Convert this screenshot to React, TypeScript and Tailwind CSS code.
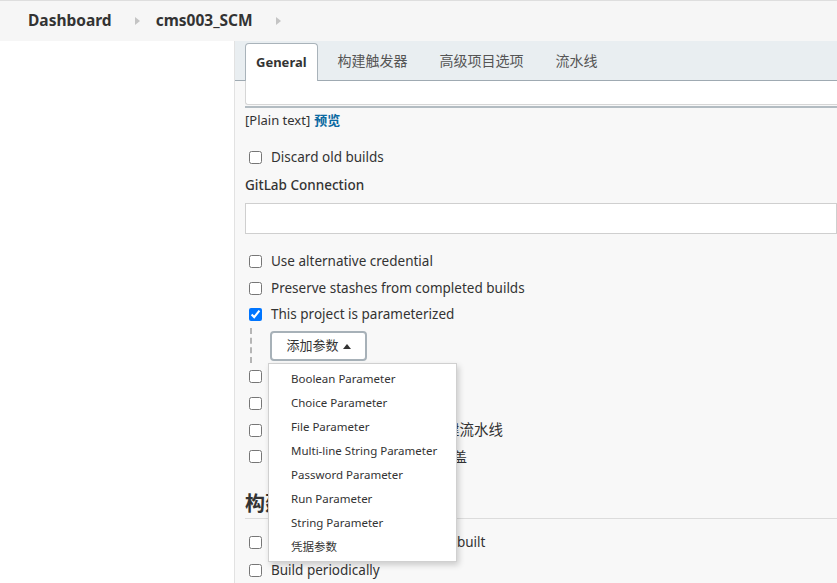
import React from "react";

const font = { fontFamily: '"Noto Sans", "Noto Sans CJK SC", sans-serif' };

function Chevron() {
  return (
    <svg width="5" height="8" viewBox="0 0 5 8" className="ml-[23px] mr-[16px]">
      <path d="M0 0 L5 4 L0 8 Z" fill="#c4c4c4" />
    </svg>
  );
}

function Check({
  label,
  checked = false,
  className = "",
  size = "text-[13.5px]",
}: {
  label: string;
  checked?: boolean;
  className?: string;
  size?: string;
}) {
  return (
    <label className={`flex items-center h-[26px] whitespace-nowrap ${className}`}>
      <input type="checkbox" defaultChecked={checked} className="ml-[4px] mr-[9px] w-[13px] h-[13px] m-0" />
      <span className={`${size} text-[#333]`}>{label}</span>
    </label>
  );
}

const params = [
  "Boolean Parameter",
  "Choice Parameter",
  "File Parameter",
  "Multi-line String Parameter",
  "Password Parameter",
  "Run Parameter",
  "String Parameter",
  "凭据参数",
];

export default function App() {
  return (
    <div className="w-[837px] h-[583px] overflow-hidden bg-white text-[#333]" style={font}>
      {/* breadcrumb */}
      <div className="h-[41px] border-t border-[#dedede] bg-[#f6f6f6] flex items-center pl-[28px]">
        <span className="text-[15.5px] font-bold text-[#333]">Dashboard</span>
        <Chevron />
        <span className="text-[15.5px] font-bold text-[#333]">cms003_SCM</span>
        <Chevron />
      </div>

      <div className="flex h-[542px]">
        <div className="w-[235px] bg-white border-r border-[#e2e2e2]" />

        <div className="flex-1 bg-[#f8f8f8] min-w-0">
          {/* tabs */}
          <div className="h-[40px] bg-[#e9eef1] border-b border-[#9faab2] flex items-end pl-[10px]">
            <div className="h-[38px] -mb-px px-[10px] mr-[4px] flex items-center bg-white border border-b-0 border-[#a9b3ba] rounded-t-[4px] text-[13px] font-bold">
              General
            </div>
            {["构建触发器", "高级项目选项", "流水线"].map((t) => (
              <div key={t} className="h-[39px] px-[16px] flex items-center text-[14px] text-[#555]">
                {t}
              </div>
            ))}
          </div>

          <div className="pl-[10px] relative">
            {/* description textarea remnant */}
            <div className="h-[24px] bg-white border-l border-b border-[#d6d6d6] rounded-bl-[3px]" />
            <div className="h-[3px] border-b-2 border-[#b3bcc2]" />

            <div className="h-[26px] flex items-center text-[13px]">
              <span className="text-[#333]">[Plain text]</span>
              <span className="ml-[4px] text-[#0b6aa2] font-bold">预览</span>
            </div>

            <Check label="Discard old builds" className="mt-[10px]" />
            <div className="mt-[2px] h-[26px] flex items-center text-[13.5px] font-medium">GitLab Connection</div>
            <div className="mt-[5px] h-[31px] bg-white border border-[#cfcfcf]" />

            <Check label="Use alternative credential" className="mt-[14px]" />
            <Check label="Preserve stashes from completed builds" className="mt-[1px]" />
            <Check label="This project is parameterized" checked />

            <div className="relative h-[36px] pt-[4px]">
              <div className="absolute left-[5px] top-[1px] h-[35px] border-l-2 border-dashed border-[#b5b5b5]" />
              <button className="ml-[25px] h-[30px] w-[97px] flex items-center justify-center gap-[4px] bg-white border-2 border-[#a7b1b8] rounded-[4px] text-[13px] text-[#333]">
                添加参数
                <svg width="8" height="5" viewBox="0 0 8 5">
                  <path d="M0 5 L4 0 L8 5 Z" fill="#333" />
                </svg>
              </button>

              <div className="absolute left-[23px] top-[36px] z-10 w-[189px] h-[199px] bg-white border border-[#d0d0d0] shadow-[2px_3px_6px_rgba(0,0,0,0.18)] pt-[3px]">
                {params.map((p) => (
                  <div key={p} className="h-[24px] flex items-center pl-[22px] text-[11.5px] text-[#333] whitespace-nowrap">
                    {p}
                  </div>
                ))}
              </div>
            </div>

            <Check label="节流构建" size="text-[14px]" />
            <Check label="不允许并发构建" size="text-[14px]" className="mt-[1px]" />
            <Check label="控制器重启后不允许恢复构建流水线" size="text-[14.5px]" className="mt-[1px]" />
            <Check label="流水线效率、持久保存设置覆盖" size="text-[14px]" />

            <div className="mt-[21px] h-[29px] flex items-center border-b border-[#dcdcdc] text-[20px] font-bold">
              构建触发器
            </div>
            <Check label="Build after other projects are built" className="mt-[10px]" />
            <Check label="Build periodically" className="mt-[2px]" />
          </div>
        </div>
      </div>
    </div>
  );
}
